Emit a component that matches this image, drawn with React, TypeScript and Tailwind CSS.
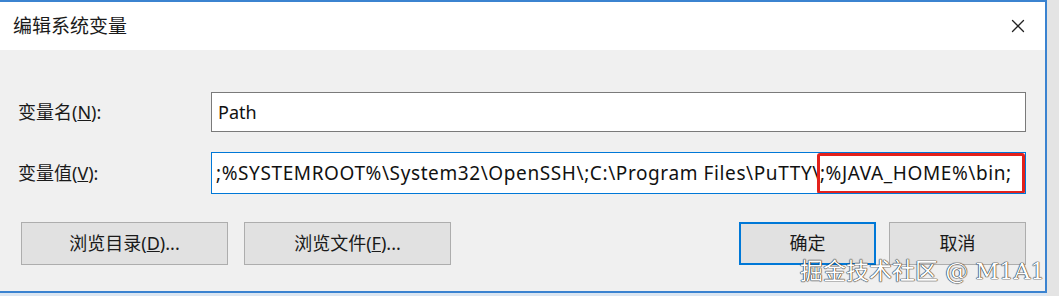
import { X } from "lucide-react";

const font = "font-['Noto_Sans','Noto_Sans_CJK_SC',sans-serif]";

function Btn({ children, primary = false, className = "" }: { children: React.ReactNode; primary?: boolean; className?: string }) {
  return (
    <div
      className={`flex h-[43px] items-center justify-center bg-[#e1e1e1] text-[18px] text-[#1a1a1a] ${
        primary ? "border-2 border-[#0078d7]" : "border border-[#adadad]"
      } ${className}`}
    >
      {children}
    </div>
  );
}

export default function App() {
  return (
    <div className={`flex h-[296px] w-[1059px] overflow-hidden bg-[#e4e4e4] ${font}`}>
      <div className="relative flex h-[296px] w-[1047px] flex-col">
        <div className="flex flex-1 flex-col border-r-2 border-t-2 border-[#3b83d0]">
          {/* Title bar */}
          <div className="flex h-[48px] items-center justify-between bg-white pl-[13px] pr-[16px]">
            <span className="text-[19px] text-[#1a1a1a]">编辑系统变量</span>
            <X size={22} strokeWidth={1.4} className="text-[#222]" />
          </div>

          {/* Body */}
          <div className="flex flex-1 flex-col bg-[#f0f0f0] pl-[18px] pr-[19px] pt-[42px]">
            <div className="flex h-[40px] items-center">
              <span className="w-[193px] text-[18px] text-[#1a1a1a]">
                变量名(<u>N</u>):
              </span>
              <div className="flex h-[40px] flex-1 items-center border border-[#7a7a7a] bg-white pl-[6px] text-[18px] text-[#111]">
                Path
              </div>
            </div>

            <div className="mt-[20px] flex h-[42px] items-center">
              <span className="w-[193px] text-[18px] text-[#1a1a1a]">
                变量值(<u>V</u>):
              </span>
              <div className="relative flex h-[42px] flex-1 items-center overflow-hidden whitespace-nowrap border border-[#0078d7] bg-white pl-[4px] text-[19px] tracking-[0.6px] text-[#111]">
                ;%SYSTEMROOT%\System32\OpenSSH\;C:\Program Files\PuTTY\;%JAVA_HOME%\bin;
                <div className="absolute right-0 top-0 h-[41px] w-[208px] rounded-[3px] border-[3px] border-[#e3221c]" />
              </div>
            </div>

            <div className="mt-[28px] flex items-center">
              <Btn className="ml-[3px] w-[207px]">
                浏览目录(<u>D</u>)...
              </Btn>
              <Btn className="ml-[16px] w-[207px]">
                浏览文件(<u>F</u>)...
              </Btn>
              <Btn primary className="ml-auto w-[137px]">
                确定
              </Btn>
              <Btn className="ml-[13px] w-[137px]">取消</Btn>
            </div>
          </div>
        </div>
        <div className="h-[5px] border-t-2 border-[#3b83d0] bg-[#dbe6f2]" />

        {/* Watermark */}
        <div className="absolute bottom-[13px] right-[2px] font-['DejaVu_Serif','Noto_Sans_CJK_SC',serif] text-[23px] leading-none text-white [text-shadow:0_0_1px_#222,0_0_1px_#222,0_0_1px_#222]">
          掘金技术社区 @ M1A1
        </div>
      </div>
    </div>
  );
}
